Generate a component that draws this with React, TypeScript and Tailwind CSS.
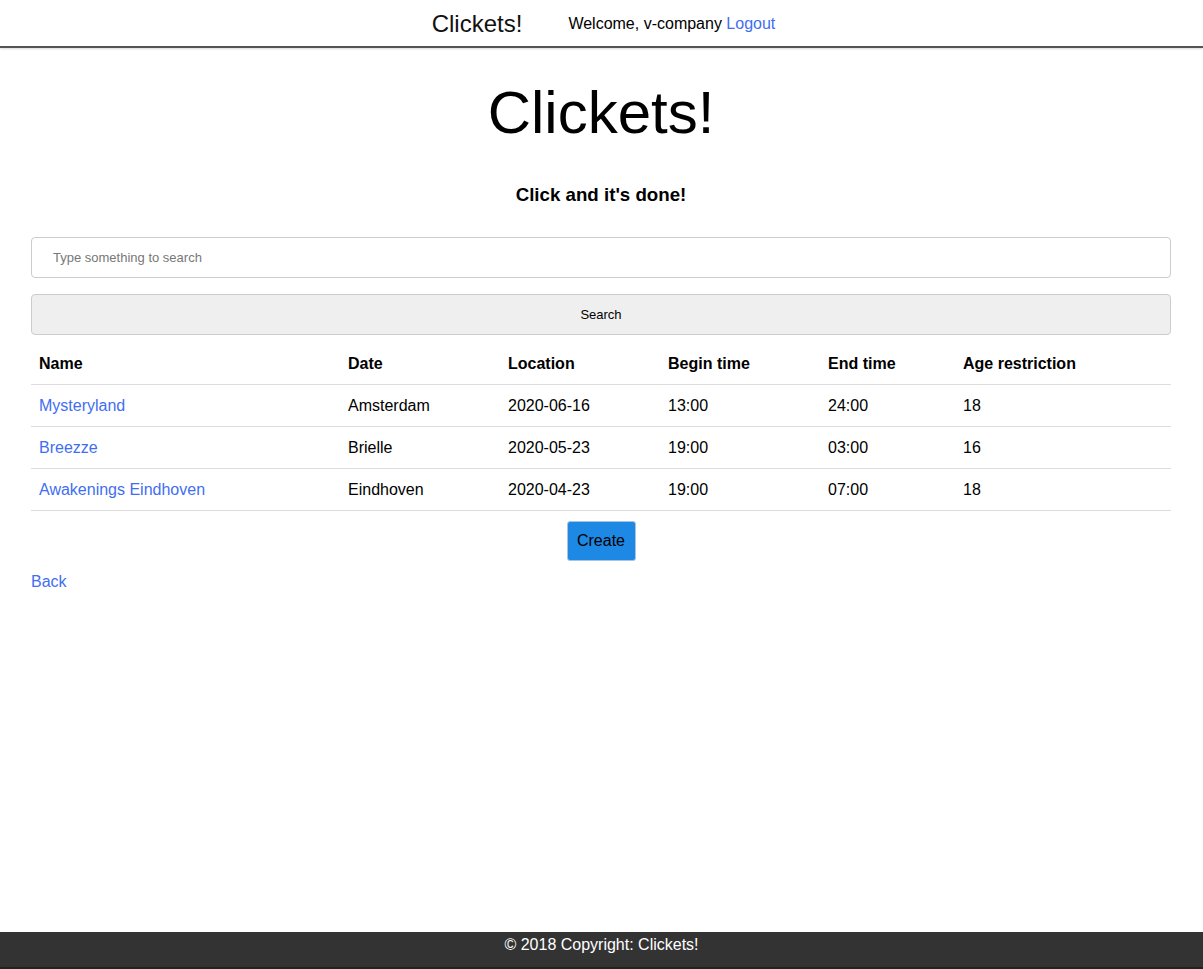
const events = [
  { name: 'Mysteryland', location: 'Amsterdam', date: '2020-06-16', begin: '13:00', end: '24:00', age: '18' },
  { name: 'Breezze', location: 'Brielle', date: '2020-05-23', begin: '19:00', end: '03:00', age: '16' },
  { name: 'Awakenings Eindhoven', location: 'Eindhoven', date: '2020-04-23', begin: '19:00', end: '07:00', age: '18' },
];

const App = () => {
  return (
    <div className="min-h-screen flex flex-col bg-white text-black font-['Liberation_Sans',Arial,sans-serif]">
      {/* Navbar */}
      <nav className="h-[48px] border-b-2 border-[#555] shadow-[0_1px_2px_rgba(0,0,0,0.15)] flex items-center justify-center gap-[46px] pl-[4px] pt-[2px]">
        <span className="text-[24px] leading-none text-[#111]">Clickets!</span>
        <span className="text-[16px]">
          Welcome, v-company{' '}
          <a href="#" className="text-[#3f6ef2]">Logout</a>
        </span>
      </nav>

      <main className="flex-1 pl-[31px] pr-[32px] pb-8">
        <h1 className="mt-[29px] text-center text-[60px] leading-[72px]">Clickets!</h1>
        <h2 className="mt-[34px] text-center text-[18.72px] leading-[24px] font-bold">Click and it's done!</h2>

        <input
          type="text"
          placeholder="Type something to search"
          className="mt-[30px] block w-full h-[41px] px-[21px] border border-[#ccc] rounded-[4px] text-[13px] placeholder:text-[#777] outline-none"
        />
        <button className="mt-[16px] block w-full h-[41px] border border-[#ccc] rounded-[4px] bg-[#efefef] text-[13px]">
          Search
        </button>

        <table className="mt-[8px] w-full border-collapse text-[16px] text-left">
          <thead>
            <tr className="h-[41px] border-b border-[#ddd]">
              <th className="w-[309px] px-2 pt-[2px] font-bold">Name</th>
              <th className="w-[160px] px-2 pt-[2px] font-bold">Date</th>
              <th className="w-[160px] px-2 pt-[2px] font-bold">Location</th>
              <th className="w-[160px] px-2 pt-[2px] font-bold">Begin time</th>
              <th className="w-[135px] px-2 pt-[2px] font-bold">End time</th>
              <th className="px-2 pt-[2px] font-bold">Age restriction</th>
            </tr>
          </thead>
          <tbody>
            {events.map((e) => (
              <tr key={e.name} className="h-[42px] border-b border-[#ddd]">
                <td className="px-2 pt-[2px]">
                  <a href="#" className="text-[#3f6ef2]">{e.name}</a>
                </td>
                <td className="px-2 pt-[2px]">{e.location}</td>
                <td className="px-2 pt-[2px]">{e.date}</td>
                <td className="px-2 pt-[2px]">{e.begin}</td>
                <td className="px-2 pt-[2px]">{e.end}</td>
                <td className="px-2 pt-[2px]">{e.age}</td>
              </tr>
            ))}
          </tbody>
        </table>

        <div className="mt-[10px] flex justify-center">
          <button className="w-[69px] h-[40px] rounded-[3px] border border-[#aac4e0] bg-[#1e88e5] text-[16px] text-black">
            Create
          </button>
        </div>

        <a href="#" className="mt-[9px] block w-fit text-[16px] leading-[24px] text-[#3f6ef2]">Back</a>
      </main>

      {/* Footer */}
      <footer className="h-[37px] bg-[#333] border-b-2 border-[#222] pt-[1px] text-white text-[16px] leading-[24px] text-center">
        © 2018 Copyright: Clickets!
      </footer>
    </div>
  );
};

export default App;
